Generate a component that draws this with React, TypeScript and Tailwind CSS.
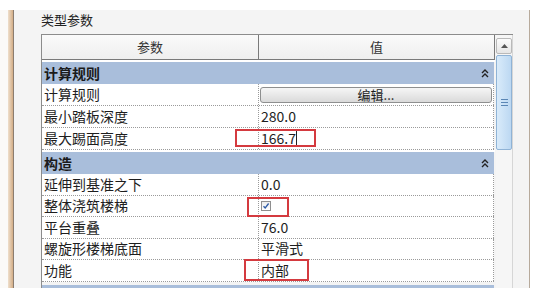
const FONT = { fontFamily: '"Noto Sans CJK SC", "Noto Sans", sans-serif' };

type Row = { label: string; value?: string; button?: boolean; check?: boolean };

const groupA: Row[] = [
  { label: '计算规则', button: true },
  { label: '最小踏板深度', value: '280.0' },
  { label: '最大踢面高度', value: '166.7' },
];

const groupB: Row[] = [
  { label: '延伸到基准之下', value: '0.0' },
  { label: '整体浇筑楼梯', check: true },
  { label: '平台重叠', value: '76.0' },
  { label: '螺旋形楼梯底面', value: '平滑式' },
  { label: '功能', value: '内部' },
];

function Chevrons() {
  return (
    <svg width="8" height="9" viewBox="0 0 8 9" className="mr-[5px]">
      <path d="M1 4 L4 1 L7 4" stroke="#222" strokeWidth="1.4" fill="none" />
      <path d="M1 8 L4 5 L7 8" stroke="#222" strokeWidth="1.4" fill="none" />
    </svg>
  );
}

function Section({ title }: { title: string }) {
  return (
    <div className="h-[24px] border-t-2 border-white">
      <div className="flex h-[22px] w-[452px] items-center justify-between bg-[#a9bedb] pl-[2px]">
        <span className="text-[14px] font-bold text-[#1a1a1a]">{title}</span>
        <Chevrons />
      </div>
    </div>
  );
}

function Checkbox() {
  return (
    <div className="flex h-[10px] w-[10px] items-center justify-center border border-[#8f8f8f] bg-gradient-to-b from-[#ececec] to-white">
      <svg width="8" height="8" viewBox="0 0 8 8">
        <path d="M1.5 4.2 L3.2 6 L6.6 1.5" stroke="#2d5aa6" strokeWidth="1.3" fill="none" />
      </svg>
    </div>
  );
}

function DataRow({ row, h }: { row: Row; h: string }) {
  return (
    <div className={`flex w-[452px] border-b border-dotted border-[#9a9a9a] bg-white ${h}`}>
      <div className="flex w-[217px] items-center border-r border-dotted border-[#9a9a9a] pl-[2px] text-[14px] text-[#1e1e1e]">
        {row.label}
      </div>
      <div className="flex w-[235px] items-center border-r border-dotted border-[#9a9a9a] text-[14px] text-[#1e1e1e]">
        {row.button && (
          <div className="mx-[1px] flex h-[16px] w-full items-center justify-center rounded-[3px] border border-[#8e8f8f] bg-gradient-to-b from-[#f6f6f6] to-[#dadada] text-[13px]">
            编辑...
          </div>
        )}
        {row.check && (
          <div className="pl-[2px]">
            <Checkbox />
          </div>
        )}
        {row.value && <span className="pl-[2px]">{row.value}</span>}
      </div>
    </div>
  );
}

function Scrollbar() {
  return (
    <div className="ml-[1px] flex w-[17px] flex-col border-r border-[#d6d6d6] bg-[#f6f6f6] pt-[3px]">
      <div className="flex h-[16px] items-center justify-center rounded-[2px] border border-[#b9b9b9] bg-gradient-to-b from-[#fbfbfb] to-[#e6e6e6]">
        <svg width="7" height="4" viewBox="0 0 7 4">
          <path d="M0 4 L3.5 0 L7 4 Z" fill="#555" />
        </svg>
      </div>
      <div className="mt-[1px] flex h-[95px] items-center justify-center rounded-[2px] border border-[#8fb3d6] bg-gradient-to-r from-[#d9ebfa] to-[#bcd8f2]">
        <div className="flex flex-col gap-[2px]">
          <div className="h-px w-[7px] bg-[#5a86b5]" />
          <div className="h-px w-[7px] bg-[#5a86b5]" />
          <div className="h-px w-[7px] bg-[#5a86b5]" />
        </div>
      </div>
    </div>
  );
}

export default function App() {
  return (
    <div className="relative h-[300px] w-[553px] overflow-hidden bg-white" style={FONT}>
      <div className="flex h-[288px] overflow-hidden pt-[10px]">
        <div className="w-[8px] bg-[#fbfaf8]" />
        <div className="w-[5px] bg-gradient-to-r from-[#efe0cd] to-[#d3ad86]" />
        <div className="w-[517px] overflow-hidden border-x border-l-[#8b7d70] border-r-[#b7aa9c] bg-[#f4f4f4] pt-[2px]">
          <div className="ml-[27px] h-[16px] text-[13px] leading-[16px] text-[#222]">类型参数</div>
          <div className="ml-[27px] mt-[6px] flex h-[300px] w-[472px] border-l border-t border-[#8c8c8c]">
            <div className="flex w-[453px] flex-col">
              <div className="flex h-[25px] border-b border-[#7a7a7a] bg-gradient-to-b from-[#fafafa] to-[#efefef] text-[13px] text-[#333]">
                <div className="flex w-[217px] items-center justify-center border-r border-[#7a7a7a]">参数</div>
                <div className="flex w-[236px] items-center justify-center border-r border-[#7a7a7a]">值</div>
              </div>
              <Section title="计算规则" />
              {groupA.map((r) => (
                <DataRow key={r.label} row={r} h="h-[22px]" />
              ))}
              <Section title="构造" />
              {groupB.map((r) => (
                <DataRow key={r.label} row={r} h="h-[21.5px]" />
              ))}
              <div className="h-[3px]" />
              <div className="h-[20px] w-[452px] bg-[#a9bedb]" />
            </div>
            <Scrollbar />
          </div>
        </div>
      </div>

      {/* red annotation boxes */}
      <div className="absolute left-[235px] top-[129px] h-[18px] w-[81px] border-2 border-[#d43a3f]" />
      <div className="absolute left-[296px] top-[131px] h-[14px] w-px bg-[#222]" />
      <div className="absolute left-[247px] top-[197px] h-[20px] w-[42px] border-2 border-[#d43a3f]" />
      <div className="absolute left-[244px] top-[259px] h-[22px] w-[65px] border-2 border-[#d43a3f]" />
    </div>
  );
}
